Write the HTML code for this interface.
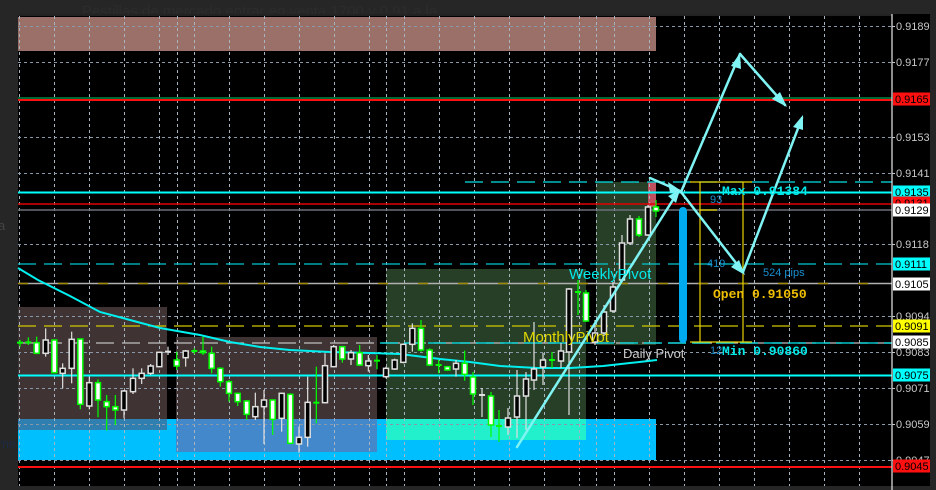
<!DOCTYPE html>
<html><head><meta charset="utf-8"><style>
html,body{margin:0;padding:0;background:#262626;width:936px;height:490px;overflow:hidden}
svg{display:block}
text{font-family:"Liberation Sans",sans-serif}
.mono{font-family:"Liberation Mono",monospace;font-weight:bold}
</style></head><body>
<svg id="s" width="936" height="490" viewBox="0 0 936 490" xmlns="http://www.w3.org/2000/svg">
<rect x="0" y="0" width="936" height="490" fill="#262626"/>
<text x="82" y="16" font-size="15" fill="#2c2c2c">Pestillas  de  mercado  entrar  en  venta  1700  y  0.91  a  la</text>
<text x="-2" y="230" font-size="13" fill="#444">a</text>
<text x="-2" y="448" font-size="13" fill="#1c2a44">me</text>
<rect x="18" y="14" width="912" height="472" fill="#000"/>
<rect x="18" y="14" width="874" height="2" fill="#222"/>
<rect x="18" y="17" width="638" height="34" fill="#9a7068"/>
<rect x="18" y="419" width="638" height="41" fill="#00bfff"/>
<rect x="18" y="307" width="149" height="123" fill="#3f3333"/>
<rect x="18" y="419" width="149" height="11" fill="#2f7fb0"/>
<rect x="176" y="337" width="201" height="115" fill="#3f3333"/>
<rect x="176" y="419" width="201" height="33" fill="#4488cc"/>
<rect x="386" y="269" width="200" height="171" fill="#283f27"/>
<rect x="386" y="419" width="200" height="21" fill="#22f0cc"/>
<rect x="596" y="182" width="60" height="163" fill="#283f27"/>
<rect x="648" y="182" width="8" height="25" fill="#c05060"/>
<g id="grid" stroke="#8a99aa" stroke-width="1" stroke-dasharray="3,3" fill="none"></g>
<line x1="18" y1="98" x2="892" y2="98" stroke="#00d060" stroke-width="1"/>
<line x1="18" y1="100" x2="892" y2="100" stroke="#ff1010" stroke-width="2"/>
<line x1="465" y1="182" x2="892" y2="182" stroke="#00e0e8" stroke-width="1.3" stroke-dasharray="18,8"/>
<line x1="18" y1="192.5" x2="892" y2="192.5" stroke="#00ffff" stroke-width="2"/>
<line x1="18" y1="204" x2="892" y2="204" stroke="#e00000" stroke-width="1.5"/>
<line x1="18" y1="210" x2="892" y2="210" stroke="#6a7078" stroke-width="1.5"/>
<line x1="18" y1="264" x2="892" y2="264" stroke="#00c8d0" stroke-width="1.3" stroke-dasharray="18,8"/>
<line x1="18" y1="283.5" x2="892" y2="283.5" stroke="#b0b0b0" stroke-width="1.5"/>
<line x1="18" y1="283.5" x2="892" y2="283.5" stroke="#a08800" stroke-width="1.5" stroke-dasharray="10,30"/>
<line x1="18" y1="326" x2="892" y2="326" stroke="#d0c800" stroke-width="1.3" stroke-dasharray="18,8"/>
<line x1="18" y1="343" x2="892" y2="343" stroke="#c0c0c0" stroke-width="1.3" stroke-dasharray="18,8"/>
<line x1="380" y1="343" x2="892" y2="343" stroke="#00e8f0" stroke-width="1.3" stroke-dasharray="18,6"/>
<line x1="18" y1="375.5" x2="892" y2="375.5" stroke="#00ffff" stroke-width="2"/>
<line x1="18" y1="467" x2="892" y2="467" stroke="#ff1010" stroke-width="2"/>
<polyline fill="none" stroke="#00f0f0" stroke-width="2" points="18,268 38,280 70,296 100,312 130,320 160,328 200,335 230,342 260,347 290,350 330,352 370,353 400,354 440,359 470,362 500,366 537,368 570,368 603,366 630,363 657,360"/>
<g id="candles"></g>
<rect x="679" y="207" width="8" height="136" rx="4" fill="#00aaee"/>
<g stroke="#e8d000" stroke-width="1.2" fill="none">
<line x1="700" y1="182" x2="700" y2="342"/>
<line x1="743" y1="182" x2="743" y2="342"/>
<line x1="690" y1="182" x2="752" y2="182"/>
<line x1="700" y1="210" x2="717" y2="210"/>
<line x1="690" y1="342" x2="752" y2="342"/>
</g>
<g stroke="#80f4f4" stroke-width="2.5" fill="none" stroke-linecap="round">
<line x1="517" y1="447" x2="676" y2="195"/>
<line x1="650" y1="178" x2="680" y2="191"/>
<line x1="681" y1="192" x2="740" y2="54"/>
<line x1="740" y1="54" x2="785" y2="105"/>
<line x1="681" y1="192" x2="743" y2="272"/>
<line x1="743" y1="272" x2="802" y2="118"/>
</g>
<g fill="#80f4f4">
<polygon points="680,190 668,196 676,203"/>
<polygon points="683,192 668,182 670,193"/>
<polygon points="740,53 731,66 741,69"/>
<polygon points="787,107 772,99 780,92"/>
<polygon points="745,275 731,267 739,260"/>
<polygon points="803,115 793,127 803,130"/>
</g>
<text x="569" y="279" font-size="15" fill="#00e8e8">WeeklyPivot</text>
<text x="523" y="342" font-size="15" fill="#e0d800">MonthlyPivot</text>
<text x="623" y="358" font-size="13" fill="#c8c8c8">Daily Pivot</text>
<text x="722" y="195" font-size="13" class="mono" fill="#00e8e8">Max 0.91384</text>
<text x="710" y="203" font-size="11" fill="#1a8fd0">93</text>
<text x="707" y="267" font-size="11" fill="#1a8fd0">419</text>
<text x="763" y="276" font-size="11" fill="#1a8fd0">524 pips</text>
<text x="713" y="298" font-size="13" class="mono" fill="#f0c000">Open 0.91050</text>
<text x="710" y="354" font-size="11" fill="#1a8fd0">12</text>
<text x="722" y="355" font-size="13" class="mono" fill="#00e8e8">Min 0.90860</text>
<rect x="930" y="0" width="6" height="490" fill="#262626"/>
<line x1="892" y1="14" x2="892" y2="490" stroke="#e8e8e8" stroke-width="1.2"/>
<g id="axis" font-size="11" fill="#c8c8c8"></g>
</svg>
<script>
var NS="http://www.w3.org/2000/svg";
function el(p,t,a){var e=document.createElementNS(NS,t);for(var k in a)e.setAttribute(k,a[k]);p.appendChild(e);return e;}
var g=document.getElementById('grid');
var vx=[19,54,89,124,159,177,194,229,264,299,334,369,386,404,439,474,509,544,579,596,614,649,684,719,754,789,824,859];
vx.forEach(function(x){el(g,'line',{x1:x+.5,y1:16,x2:x+.5,y2:486,stroke:'#a8b4c0'});});
var hy=[26,62,137,173,244,316,352,388,424,460];
hy.forEach(function(y){el(g,'line',{x1:18,y1:y+.5,x2:892,y2:y+.5});});
var c=document.getElementById('candles');
function cand(x,o,cl,hi,lo,bull){
  var col=bull?'#00ff00':'#e0e0e0';
  var t=Math.min(o,cl),b=Math.max(o,cl);
  el(c,'line',{x1:x,y1:hi,x2:x,y2:lo,stroke:col,'stroke-width':1.2});
  if(b-t<1.5){el(c,'rect',{x:x-3,y:t-1,width:6,height:2,fill:col});return;}
  el(c,'rect',{x:x-2.5,y:t,width:5,height:b-t,fill:bull?'#ffffff':'#000',stroke:col,'stroke-width':1.5});
}
var z3=[[60,188,188,180,200,1],[85,187,187,172,195,1],[110,188,220,170,222,1],[137,180,220,145,230,0],[163,180,278,178,280,1],[188,265,280,250,325,0],[215,178,265,155,310,0],[241,177,373,175,388,1],[268,308,378,290,388,0],[294,308,360,298,412,1],[320,365,380,345,452,1],[346,380,390,345,435,1],[372,333,390,330,415,0],[399,295,335,265,342,0],[425,280,295,265,312,0],[452,258,280,252,285,0],[478,217,260,215,262,0],[504,215,215,200,225,0],[530,240,258,215,270,1],[557,213,233,210,260,0],[583,213,213,205,222,1],[609,213,218,170,225,1],[635,220,265,200,280,1],[661,265,305,262,320,1],[687,305,340,300,365,1],[713,340,365,338,378,1],[740,363,403,360,420,1],[766,380,410,338,420,0],[792,360,380,330,492,0],[818,360,418,360,465,1],[845,340,415,338,455,0],[871,343,490,340,490,1],[897,472,492,440,518,0],[923,367,472,290,500,0],[949,368,370,260,430,1],[975,257,368,220,370,0],[1001,200,260,195,262,0],[1027,200,237,198,248,1],[1053,218,237,210,255,0],[1079,218,255,195,258,1],[1105,243,257,225,275,0],[1131,242,242,225,268,1],[1158,265,290,260,295,0],[1184,240,267,236,270,0],[1210,193,247,190,250,0],[1237,145,193,130,215,0],[1263,145,210,120,215,1],[1289,210,255,205,258,1],[1316,255,255,240,280,1],[1342,260,270,258,272,1],[1368,250,267,240,290,0],[1394,250,283,212,302,1]];
z3.forEach(function(a){cand(a[0]/3,a[1]/3+280,a[2]/3+280,a[3]/3+280,a[4]/3+280,a[5]);});
var more=[[473,377,394,372,405,1],[482,395,395,388,417,0],[491,396,425,392,437,1],[499,426,426,410,442,1],[508,418,427,408,435,0],[517,396,417,370,438,0],[526,379,396,372,430,0],[534,369,380,322,390,0],[543,360,367,353,385,0],[552,360,360,352,368,1],[561,351,361,343,368,0],[569,289,352,288,415,0],[578,292,292,280,315,1],[586,293,321,290,322,1],[595,333,342,320,345,0],[604,312,333,305,336,0],[613,287,311,282,313,0],[622,243,280,235,281,0],[630,219,243,215,245,0],[639,219,235,216,237,1],[648,207,235,205,236,0],[656,207,211,200,217,1]];
more.forEach(function(a){cand(a[0],a[1],a[2],a[3],a[4],a[5]);});
var ax=document.getElementById('axis');
var lab=[[26,'0.9189'],[62,'0.9177'],[137,'0.9153'],[173,'0.9141'],[244,'0.9118'],[316,'0.9094'],[352,'0.9083'],[388,'0.9071'],[424,'0.9059'],[460,'0.9047']];
lab.forEach(function(l){el(ax,'line',{x1:892,y1:l[0]+.5,x2:895,y2:l[0]+.5,stroke:'#c8c8c8'});var t=el(ax,'text',{x:896,y:l[0]+4});t.textContent=l[1];});
var box=[[99,'#ff1010','#000','0.9165'],[192,'#00ffff','#000','0.9135'],[203,'#ff1010','#000','0.9131'],[210,'#ffffff','#000','0.9129'],[264,'#00ffff','#000','0.9111'],[284,'#ffffff','#000','0.9105'],[326,'#ffff00','#000','0.9091'],[342,'#ffffff','#000','0.9085'],[375,'#00ffff','#000','0.9075'],[466,'#ff1010','#000','0.9045']];
box.forEach(function(b){el(ax,'rect',{x:893,y:b[0]-6.5,width:37,height:13,fill:b[1]});var t=el(ax,'text',{x:895,y:b[0]+4,fill:b[2]});t.textContent=b[3];});
</script>
</body></html>
